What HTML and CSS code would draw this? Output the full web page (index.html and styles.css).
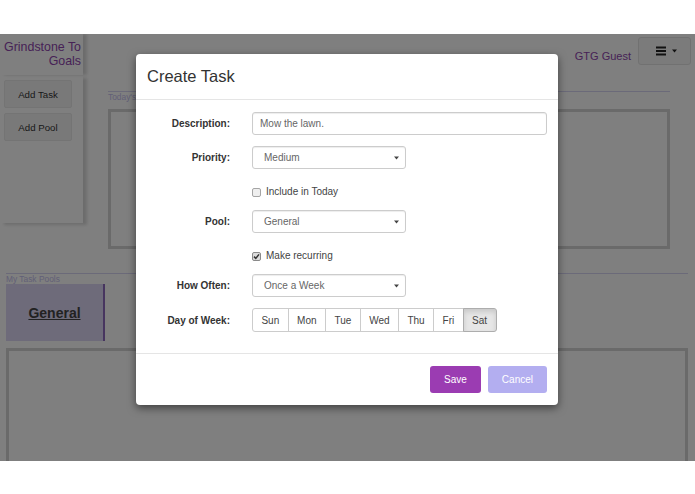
FILE: index.html
```html
<!DOCTYPE html>
<html>
<head>
<meta charset="utf-8">
<title>Grindstone To Goals</title>
<link rel="stylesheet" href="styles.css">
</head>
<body>
<div class="frame">
  <div class="app">
    <header class="topbar">
      <div class="brand">Grindstone To<br>Goals</div>
      <span class="user">GTG Guest</span>
      <button class="menu-btn">
        <svg width="11" height="10" viewBox="0 0 11 10"><rect x="0" y="0.5" width="10" height="2" fill="#222"/><rect x="0" y="4" width="10" height="2" fill="#222"/><rect x="0" y="7.5" width="10" height="2" fill="#222"/></svg>
        <svg width="5" height="4" viewBox="0 0 5 4"><path d="M0 0.5 H5 L2.5 3.5 Z" fill="#222"/></svg>
      </button>
    </header>
    <div class="main">
      <aside class="sidebar">
        <button class="side-btn">Add Task</button>
        <button class="side-btn">Add Pool</button>
      </aside>
      <section class="today">
        <div class="section-label">Today's Tasks</div>
        <div class="today-box"></div>
      </section>
    </div>
    <section class="pools">
      <div class="section-label pools-label">My Task Pools</div>
      <div class="pool-card"><span>General</span></div>
      <div class="pool-area"></div>
    </section>
  </div>

  <div class="backdrop"></div>

  <div class="modal">
    <div class="modal-header">
      <h4 class="modal-title">Create Task</h4>
    </div>
    <div class="modal-body">
      <label class="form-label">Description:</label>
      <input class="input" type="text" value="Mow the lawn." readonly>

      <label class="form-label">Priority:</label>
      <div class="input select"><span>Medium</span><svg class="caret" width="5" height="4" viewBox="0 0 5 4"><path d="M0 0.5 H5 L2.5 3.5 Z" fill="#444"/></svg></div>

      <span></span>
      <div class="check"><span class="box"></span><span>Include in Today</span></div>

      <label class="form-label">Pool:</label>
      <div class="input select"><span>General</span><svg class="caret" width="5" height="4" viewBox="0 0 5 4"><path d="M0 0.5 H5 L2.5 3.5 Z" fill="#444"/></svg></div>

      <span></span>
      <div class="check"><span class="box checked"><svg width="7" height="7" viewBox="0 0 7 7"><path d="M1 3.6 L2.8 5.4 L6 1.4" fill="none" stroke="#333" stroke-width="1.5"/></svg></span><span>Make recurring</span></div>

      <label class="form-label">How Often:</label>
      <div class="input select"><span>Once a Week</span><svg class="caret" width="5" height="4" viewBox="0 0 5 4"><path d="M0 0.5 H5 L2.5 3.5 Z" fill="#444"/></svg></div>

      <label class="form-label">Day of Week:</label>
      <div class="days">
        <button class="day">Sun</button>
        <button class="day">Mon</button>
        <button class="day">Tue</button>
        <button class="day">Wed</button>
        <button class="day">Thu</button>
        <button class="day">Fri</button>
        <button class="day active">Sat</button>
      </div>
    </div>
    <div class="modal-footer">
      <button class="btn btn-save">Save</button>
      <button class="btn btn-cancel">Cancel</button>
    </div>
  </div>
</div>
</body>
</html>
```

FILE: styles.css
```css
* { box-sizing: border-box; }
html, body { margin: 0; padding: 0; background: #fff; }
body { font-family: "Liberation Sans", Arial, sans-serif; color: #333; }
button { font-family: "Liberation Sans", Arial, sans-serif; cursor: pointer; }

.frame {
  position: relative;
  margin-top: 34px;
  height: 427px;
  overflow: hidden;
  background: #fff;
}
.app { width: 695px; }

/* top bar */
.topbar { display: flex; align-items: flex-start; height: 42px; }
.brand {
  width: 83px; height: 41px;
  padding: 6px 2px 0 0;
  text-align: right;
  font-size: 12.4px; line-height: 14px;
  color: #8e44ad;
  box-shadow: 4px 0 3px rgba(0,0,0,.15);
}
.user {
  margin-left: auto; margin-top: 15px;
  font-size: 11px; line-height: 14px;
  color: #8e44ad;
}
.menu-btn {
  margin: 3px 4px 0 7px;
  width: 53px; height: 28px;
  border: 1px solid #e2e2e2; border-radius: 3px;
  background: #f6f6f6;
  display: flex; align-items: center; justify-content: center; gap: 5px;
  padding: 0 0 0 4px;
}

/* main */
.main { display: flex; align-items: flex-start; }
.sidebar {
  width: 83px; height: 147px;
  padding: 4px 0 0 4px;
  display: flex; flex-direction: column; gap: 5px;
  box-shadow: 4px 2px 3px rgba(0,0,0,.15);
}
.side-btn {
  width: 68px; height: 28px;
  font-size: 9.7px; color: #333;
  background: #f3f3f3;
  border: 1px solid #e8e8e8; border-radius: 2px;
  padding: 0;
}
.today {
  margin: 15px 0 0 25px;
  width: 562px;
  border-top: 1px solid #d6d4f2;
}
.section-label { font-size: 8.4px; line-height: 11px; color: #c4c0ee; }
.today-box { margin-top: 6px; height: 140px; border: 3.5px solid #d4d4d4; }

.pools {
  margin: 24px 0 0 6px;
  width: 682px;
  border-top: 1px solid #d6d4f2;
}
.pools-label { line-height: 10px; }
.pool-card {
  width: 99px; height: 57px;
  background: #dcd6f5;
  border-right: 2px solid #8e6bbf;
  display: flex; align-items: center; justify-content: center;
  font-weight: bold; font-size: 14px;
  text-decoration: underline;
  color: #444;
}
.pool-area { margin-top: 7px; height: 160px; border: 3px solid #d4d4d4; }

/* overlay */
.backdrop { position: absolute; inset: 0; background: rgba(0,0,0,.5); }

/* modal */
.modal {
  position: absolute; left: 136px; top: 20px;
  width: 422px;
  background: #fff;
  border-radius: 4px;
  box-shadow: 0 3px 9px rgba(0,0,0,.5);
}
.modal-header {
  height: 46px;
  border-bottom: 1px solid #e5e5e5;
  padding: 0 11px;
  display: flex; align-items: center;
}
.modal-title { margin: 0; font-size: 16.5px; font-weight: normal; color: #333; }
.modal-body {
  padding: 12px 11px 21px;
  display: grid;
  grid-template-columns: 83px 295px;
  column-gap: 22px; row-gap: 11px;
  align-items: center;
}
.form-label { text-align: right; font-size: 10px; font-weight: bold; color: #333; }
.input {
  height: 23px; width: 295px;
  border: 1px solid #ccc; border-radius: 3px;
  padding: 0 7px;
  font-family: "Liberation Sans", Arial, sans-serif;
  font-size: 10px; color: #666;
  box-shadow: inset 0 1px 1px rgba(0,0,0,.075);
  outline: none;
}
.select {
  width: 154px;
  display: flex; align-items: center; justify-content: space-between;
  padding: 0 6px 0 11px;
}
.caret { display: block; }

.check {
  height: 19px; padding-top: 5px;
  display: flex; align-items: center; gap: 5px;
  font-size: 10px; line-height: 14px; color: #444;
}
.box {
  width: 9px; height: 9px;
  border: 1px solid #a5a5a5; border-radius: 2px;
  background: #efefef;
  display: flex; align-items: center; justify-content: center;
}
.box.checked { background: #dcdcdc; border-color: #8a8a8a; }

.days { display: flex; height: 24px; }
.day {
  height: 24px;
  padding: 0 8.45px;
  margin-left: -1px;
  border: 1px solid #ccc;
  background: #fff;
  font-size: 10px; color: #444;
}
.day:first-child { margin-left: 0; border-radius: 3px 0 0 3px; }
.day:last-child { border-radius: 0 3px 3px 0; }
.day.active {
  background: #e6e6e6; border-color: #adadad;
  box-shadow: inset 0 3px 5px rgba(0,0,0,.125);
  position: relative;
}

.modal-footer {
  border-top: 1px solid #e5e5e5;
  padding: 12px 11px;
  display: flex; justify-content: flex-end; gap: 7px;
}
.btn {
  height: 27px; padding: 0 14px;
  border: none; border-radius: 3px;
  color: #fff; font-size: 10px;
}
.btn-save { background: #9b3cb2; }
.btn-cancel { background: #b3aef0; }
```
